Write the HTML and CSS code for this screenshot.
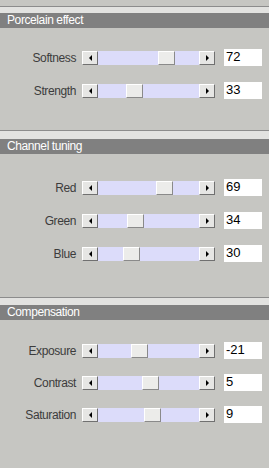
FILE: index.html
```html
<!DOCTYPE HTML>
<html>
<head>
<link rel="stylesheet" href="styles.css">
</head>
<body>

<div class="panel">
  <div class="top-gap"></div>

  <!-- Porcelain effect -->
  <section class="group group-first">
    <div class="group-rule"></div>
    <div class="group-title">Porcelain effect</div>
    <div class="group-body">
      <div class="row">
        <span class="label">Softness</span>
        <div class="slider">
          <span class="btn btn-left"></span>
          <div class="track"><span class="thumb" style="--v: 0.72"></span></div>
          <span class="btn btn-right"></span>
        </div>
        <div class="value">72</div>
      </div>
      <div class="row">
        <span class="label">Strength</span>
        <div class="slider">
          <span class="btn btn-left"></span>
          <div class="track"><span class="thumb" style="--v: 0.33"></span></div>
          <span class="btn btn-right"></span>
        </div>
        <div class="value">33</div>
      </div>
    </div>
  </section>

  <!-- Channel tuning -->
  <section class="group group-second">
    <div class="group-rule"></div>
    <div class="group-title">Channel tuning</div>
    <div class="group-body">
      <div class="row">
        <span class="label">Red</span>
        <div class="slider">
          <span class="btn btn-left"></span>
          <div class="track"><span class="thumb" style="--v: 0.69"></span></div>
          <span class="btn btn-right"></span>
        </div>
        <div class="value">69</div>
      </div>
      <div class="row">
        <span class="label">Green</span>
        <div class="slider">
          <span class="btn btn-left"></span>
          <div class="track"><span class="thumb" style="--v: 0.34"></span></div>
          <span class="btn btn-right"></span>
        </div>
        <div class="value">34</div>
      </div>
      <div class="row">
        <span class="label">Blue</span>
        <div class="slider">
          <span class="btn btn-left"></span>
          <div class="track"><span class="thumb" style="--v: 0.30"></span></div>
          <span class="btn btn-right"></span>
        </div>
        <div class="value">30</div>
      </div>
    </div>
  </section>

  <!-- Compensation -->
  <section class="group group-third">
    <div class="group-rule"></div>
    <div class="group-title">Compensation</div>
    <div class="group-body">
      <div class="row">
        <span class="label">Exposure</span>
        <div class="slider">
          <span class="btn btn-left"></span>
          <div class="track"><span class="thumb" style="--v: 0.395"></span></div>
          <span class="btn btn-right"></span>
        </div>
        <div class="value">-21</div>
      </div>
      <div class="row">
        <span class="label">Contrast</span>
        <div class="slider">
          <span class="btn btn-left"></span>
          <div class="track"><span class="thumb" style="--v: 0.525"></span></div>
          <span class="btn btn-right"></span>
        </div>
        <div class="value">5</div>
      </div>
      <div class="row">
        <span class="label">Saturation</span>
        <div class="slider">
          <span class="btn btn-left"></span>
          <div class="track"><span class="thumb" style="--v: 0.545"></span></div>
          <span class="btn btn-right"></span>
        </div>
        <div class="value">9</div>
      </div>
    </div>
  </section>
</div>

</body>
</html>
```

FILE: styles.css
```css
html, body {
  margin: 0;
  padding: 0;
  background-color: #c6c6c2;
}

body {
  font-family: "Liberation Sans", Arial, sans-serif;
  font-size: 12px;
  letter-spacing: -0.4px;
}

.panel {
  width: 269px;
  height: 468px;
  overflow: hidden;
}

.top-gap {
  height: 6px;
}

/* Group header */
.group-rule {
  height: 6px;
  border-top: 1px solid #8c8c8c;
  background-color: #e2e2e0;
}

.group-second .group-rule,
.group-third .group-rule {
  height: 8px;
}

.group-third .group-rule {
  height: 7px;
}

.group-title {
  height: 15px;
  line-height: 15px;
  padding-left: 7px;
  background-color: #808080;
  color: #ffffff;
}

/* Group body */
.group-body {
  display: flex;
  flex-direction: column;
  gap: 16px;
}

.group-first .group-body {
  padding: 21px 0 31px;
}

.group-second .group-body {
  padding: 25px 0 35px;
}

.group-third .group-body {
  padding: 22px 0;
  gap: 15px;
}

/* Rows */
.row {
  display: flex;
  align-items: center;
  height: 17px;
}

.label {
  width: 76px;
  padding-right: 6px;
  text-align: right;
  color: #3c3c3c;
}

.slider {
  display: flex;
  height: 14px;
  width: 133px;
}

.btn {
  width: 16px;
  box-sizing: border-box;
  background-color: #e6e6e4;
  border-top: 1px solid #ffffff;
  border-left: 1px solid #ffffff;
  border-right: 1px solid #707070;
  border-bottom: 1px solid #707070;
  display: flex;
  align-items: center;
  justify-content: center;
}

.btn::before {
  content: "";
  width: 0;
  height: 0;
  border-top: 3px solid transparent;
  border-bottom: 3px solid transparent;
}

.btn-left::before {
  border-right: 3px solid #000000;
}

.btn-right::before {
  border-left: 3px solid #000000;
}

.track {
  flex: 1;
  position: relative;
  background-color: #dcdcfa;
}

.thumb {
  position: absolute;
  top: 0;
  left: calc((100% - 17px) * var(--v));
  width: 17px;
  height: 14px;
  box-sizing: border-box;
  background-color: #ececea;
  border-top: 1px solid #ffffff;
  border-left: 1px solid #ffffff;
  border-right: 1px solid #8a8a8a;
  border-bottom: 1px solid #8a8a8a;
}

.value {
  margin-left: 9px;
  width: 38px;
  height: 17px;
  box-sizing: border-box;
  padding-left: 2px;
  line-height: 16px;
  background-color: #ffffff;
  color: #000000;
  font-size: 13px;
  letter-spacing: 0;
}
```
